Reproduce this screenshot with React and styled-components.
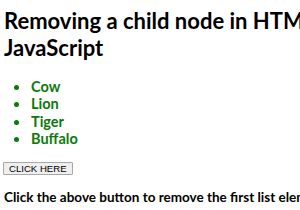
import React from "react";
import styled, { createGlobalStyle } from "styled-components";

const GlobalStyle = createGlobalStyle`
  html, body {
    margin: 0;
    padding: 0;
    background: #fff;
  }
  body {
    font-family: Lato, "Open Sans", sans-serif;
    color: #000;
    overflow: hidden;
  }
`;

const Page = styled.div`
  width: 300px;
  height: 210px;
  padding: 7px 0 0 4px;
  box-sizing: border-box;
  white-space: nowrap;
  overflow: hidden;
`;

const Title = styled.h1`
  margin: 0;
  font-size: 22px;
  line-height: 27px;
  font-weight: 700;
  white-space: normal;
  width: 400px;
`;

const List = styled.ul`
  margin: 17px 0 0;
  padding-left: 26px;
  list-style: disc;
  color: #0b7a0b;
  font-size: 14.5px;
  font-weight: 700;
  line-height: 17.3px;
`;

const Item = styled.li`
  padding-left: 1px;
`;

const Button = styled.button`
  display: block;
  margin: 15px 0 0 -1px;
  padding: 0 5px;
  height: 11px;
  font-family: "Liberation Sans", Arial, sans-serif;
  font-size: 9.6px;
  line-height: 11px;
  color: #000;
  background: #efefef;
  border: 1px solid #a8a8a8;
  border-radius: 1px;
  box-sizing: content-box;
`;

const Note = styled.h3`
  margin: 14px 0 0;
  font-size: 13.5px;
  font-weight: 700;
`;

const animals = ["Cow", "Lion", "Tiger", "Buffalo"];

export default function App() {
  return (
    <>
      <GlobalStyle />
      <Page>
        <Title>Removing a child node in HTML using JavaScript</Title>
        <List>
          {animals.map((a) => (
            <Item key={a}>{a}</Item>
          ))}
        </List>
        <Button>CLICK HERE</Button>
        <Note>Click the above button to remove the first list element.</Note>
      </Page>
    </>
  );
}
